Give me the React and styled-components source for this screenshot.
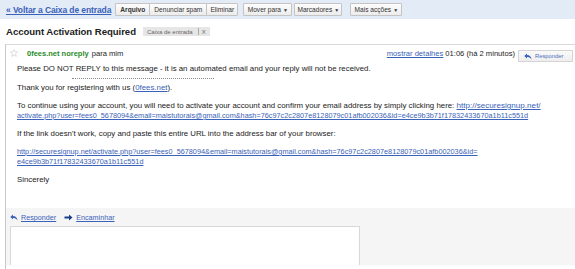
import React from "react";
import styled, { createGlobalStyle } from "styled-components";

const Global = createGlobalStyle`
  html, body { margin: 0; padding: 0; background: #fff; }
  body { font-family: "Liberation Sans", Arial, sans-serif; color: #222; }
  #root { width: 575px; height: 269px; overflow: hidden; }
`;

const Page = styled.div`
  width: 575px;
  height: 269px;
  display: flex;
  flex-direction: column;
  background: #fff;
`;

const Toolbar = styled.div`
  height: 19px;
  background: #e3ebf7;
  display: flex;
  align-items: center;
  padding: 0 0 0 6px;
  box-sizing: border-box;
`;

const BackLink = styled.a`
  font-size: 8.5px;
  font-weight: bold;
  color: #3a62b8;
  text-decoration: underline;
  margin-right: 5px;
  white-space: nowrap;
  letter-spacing: -0.1px;
`;

const Group = styled.div`
  display: flex;
  margin-left: ${(p) => p.$gap || 0}px;
`;

const Btn = styled.div`
  height: 13px;
  width: ${(p) => p.$w}px;
  box-sizing: border-box;
  border: 1px solid #c4c4c4;
  margin-left: -1px;
  background: linear-gradient(#fdfdfd, #ececec);
  font-size: 6.6px;
  color: #333;
  display: flex;
  align-items: center;
  justify-content: center;
  white-space: nowrap;
  border-radius: 1px;
  font-weight: ${(p) => (p.$bold ? "bold" : "normal")};
`;

const Caret = styled.span`
  font-size: 5px;
  margin-left: 2px;
`;

const TitleRow = styled.div`
  display: flex;
  align-items: center;
  padding: 5px 0 0 6px;
  height: 20px;
  box-sizing: border-box;
`;

const Title = styled.h1`
  margin: 0;
  font-size: 9.6px;
  font-weight: bold;
  color: #222;
  letter-spacing: -0.05px;
`;

const Label = styled.span`
  margin-left: 7px;
  background: #e6e6e6;
  color: #666;
  font-size: 6px;
  padding: 1px 4px;
  display: flex;
  align-items: center;
  gap: 2px;
`;

const Sep = styled.span`
  border-left: 1px solid #aaa;
  height: 7px;
  margin: 0 1px 0 3px;
`;

const Card = styled.div`
  margin: 5px 0 0 5px;
  border-left: 1px solid #c8c8c8;
  border-top: 1px solid #d8d8d8;
  flex: 1;
  display: flex;
  flex-direction: column;
  min-height: 0;
`;

const HeaderRow = styled.div`
  display: flex;
  align-items: center;
  height: 16px;
  padding: 0 2px 0 4px;
`;

const Star = styled.svg`
  width: 8px;
  height: 8px;
  margin-right: 9px;
`;

const Sender = styled.span`
  color: #2a8b2a;
  font-weight: bold;
  font-size: 7.5px;
`;

const Meta = styled.span`
  font-size: 7.6px;
  color: #222;
  margin-left: 3px;
`;

const Spacer = styled.div`
  flex: 1;
`;

const DetailsLink = styled.a`
  font-size: 7.6px;
  color: #3a62b8;
  text-decoration: underline;
  margin-right: 2px;
`;

const Time = styled.span`
  font-size: 7.6px;
  color: #222;
  margin-right: 3px;
`;

const ReplyBtn = styled.div`
  height: 12px;
  width: 55px;
  box-sizing: border-box;
  border: 1px solid #d4d4d4;
  background: linear-gradient(#fafafa, #eee);
  font-size: 5.8px;
  color: #4a6fc0;
  display: flex;
  align-items: center;
  padding-left: 5px;
  gap: 3px;
  margin-top: 6px;
`;

const Body = styled.div`
  padding: 3px 0 0 11px;
  font-size: 7.85px;
  line-height: 10px;
  color: #222;
`;

const Para = styled.p`
  margin: 0 0 ${(p) => p.$mb ?? 8}px 0;
  white-space: nowrap;
`;

const Dashes = styled.div`
  width: 142px;
  margin: 0 0 4px 55px;
  border-top: 1px dotted #888;
  height: 0;
`;

const Link = styled.a`
  color: #3a62b8;
  text-decoration: underline;
  font-size: ${(p) => p.$fs || 7.3}px;
`;

const Footer = styled.div`
  margin-top: auto;
  background: #f5f5f5;
  height: 57px;
  margin-bottom: 4px;
  display: flex;
  flex-direction: column;
  padding: 5px 0 0 4px;
  box-sizing: border-box;
`;

const Actions = styled.div`
  display: flex;
  align-items: center;
  gap: 8px;
  height: 9px;
`;

const Action = styled.a`
  display: flex;
  align-items: center;
  gap: 3px;
  font-size: 7.2px;
  color: #3a62b8;
  text-decoration: underline;
`;

const Composer = styled.div`
  margin-top: 4px;
  width: 350px;
  flex: 1;
  background: #fff;
  border: 1px solid #d8d8d8;
  border-bottom: none;
  box-sizing: border-box;
`;

const ReplyIcon = ({ color = "#3a62b8" }) => (
  <svg width="8" height="7" viewBox="0 0 8 7">
    <path d="M3 0.5 L0.3 3 L3 5.5 V4 C5 3.8 6.5 4.6 7.6 6.6 C7.3 3.6 5.6 2 3 1.9 Z" fill={color} />
  </svg>
);

const ForwardIcon = () => (
  <svg width="9" height="7" viewBox="0 0 9 7">
    <path d="M0.5 2.6 H5 V0.6 L8.5 3.5 L5 6.4 V4.4 H0.5 Z" fill="#1d3f8a" />
  </svg>
);

export default function App() {
  return (
    <Page>
      <Global />
      <Toolbar>
        <BackLink>« Voltar a Caixa de entrada</BackLink>
        <Group>
          <Btn $bold $w={35}>Arquivo</Btn>
          <Btn $w={58}>Denunciar spam</Btn>
          <Btn $w={32}>Eliminar</Btn>
        </Group>
        <Group $gap={6}>
          <Btn $w={49}>
            Mover para<Caret>▼</Caret>
          </Btn>
        </Group>
        <Group $gap={3}>
          <Btn $w={48}>
            Marcadores<Caret>▼</Caret>
          </Btn>
        </Group>
        <Group $gap={9}>
          <Btn $w={52}>
            Mais acções<Caret>▼</Caret>
          </Btn>
        </Group>
      </Toolbar>
      <TitleRow>
        <Title>Account Activation Required</Title>
        <Label>
          Caixa de entrada<Sep />X
        </Label>
      </TitleRow>
      <Card>
        <HeaderRow>
          <Star viewBox="0 0 10 10">
            <path
              d="M5 0.6 L6.3 3.6 L9.5 3.8 L7 5.9 L7.8 9.2 L5 7.4 L2.2 9.2 L3 5.9 L0.5 3.8 L3.7 3.6 Z"
              fill="none"
              stroke="#c9c9c9"
              strokeWidth="0.8"
            />
          </Star>
          <Sender>0fees.net noreply</Sender>
          <Meta>para mim</Meta>
          <Spacer />
          <DetailsLink>mostrar detalhes</DetailsLink>
          <Time>01:06 (há 2 minutos)</Time>
          <ReplyBtn>
            <ReplyIcon />
            Responder
          </ReplyBtn>
        </HeaderRow>
        <Body>
          <Para $mb={4}>
            Please DO NOT REPLY to this message - it is an automated email and your reply will not be received.
          </Para>
          <Dashes />
          <Para>
            Thank you for registering with us (<Link $fs={7.85}>0fees.net</Link>).
          </Para>
          <Para>
            To continue using your account, you will need to activate your account and confirm your email address by
            simply clicking here: <Link $fs={8.1}>http://securesignup.net/</Link>
            <br />
            <Link>
              activate.php?user=fees0_5678094&amp;email=maistutorais@gmail.com&amp;hash=76c97c2c2807e8128079c01afb002036&amp;id=e4ce9b3b71f17832433670a1b11c551d
            </Link>
          </Para>
          <Para>If the link doesn't work, copy and paste this entire URL into the address bar of your browser:</Para>
          <Para>
            <Link>
              http://securesignup.net/activate.php?user=fees0_5678094&amp;email=maistutorais@gmail.com&amp;hash=76c97c2c2807e8128079c01afb002036&amp;id=
            </Link>
            <br />
            <Link>e4ce9b3b71f17832433670a1b11c551d</Link>
          </Para>
          <Para>Sincerely</Para>
        </Body>
        <Footer>
          <Actions>
            <Action>
              <ReplyIcon />
              Responder
            </Action>
            <Action>
              <ForwardIcon />
              Encaminhar
            </Action>
          </Actions>
          <Composer />
        </Footer>
      </Card>
    </Page>
  );
}
